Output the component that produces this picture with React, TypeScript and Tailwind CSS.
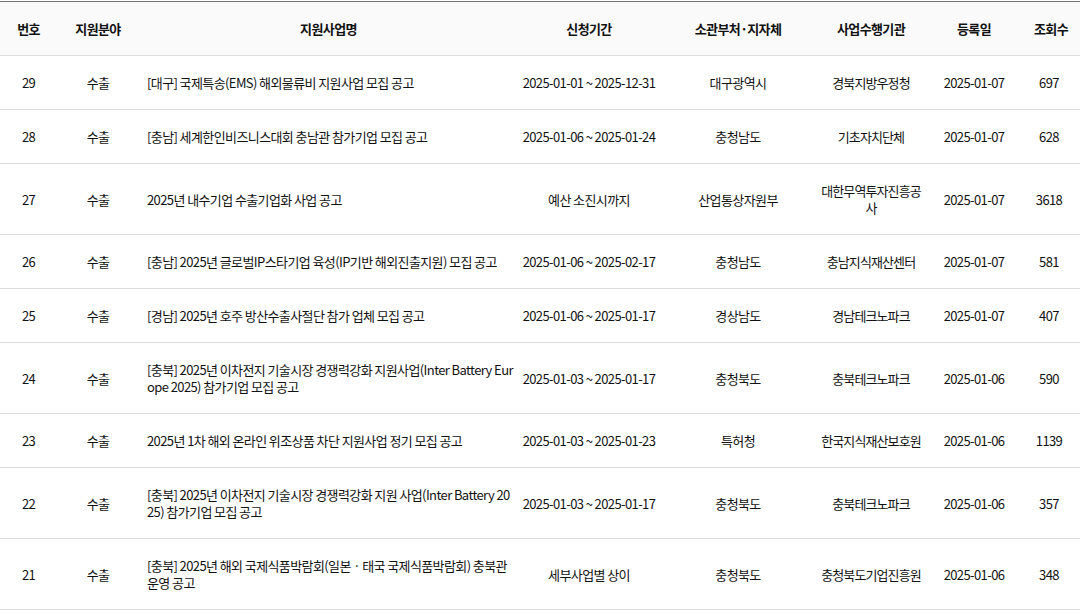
import React from "react";

type Row = {
  no: number;
  field: string;
  title: string;
  period: string;
  dept: string;
  agency: string;
  date: string;
  views: number;
};

const rows: Row[] = [
  { no: 29, field: "수출", title: "[대구] 국제특송(EMS) 해외물류비 지원사업 모집 공고", period: "2025-01-01 ~ 2025-12-31", dept: "대구광역시", agency: "경북지방우정청", date: "2025-01-07", views: 697 },
  { no: 28, field: "수출", title: "[충남] 세계한인비즈니스대회 충남관 참가기업 모집 공고", period: "2025-01-06 ~ 2025-01-24", dept: "충청남도", agency: "기초자치단체", date: "2025-01-07", views: 628 },
  { no: 27, field: "수출", title: "2025년 내수기업 수출기업화 사업 공고", period: "예산 소진시까지", dept: "산업통상자원부", agency: "대한무역투자진흥공사", date: "2025-01-07", views: 3618 },
  { no: 26, field: "수출", title: "[충남] 2025년 글로벌IP스타기업 육성(IP기반 해외진출지원) 모집 공고", period: "2025-01-06 ~ 2025-02-17", dept: "충청남도", agency: "충남지식재산센터", date: "2025-01-07", views: 581 },
  { no: 25, field: "수출", title: "[경남] 2025년 호주 방산수출사절단 참가 업체 모집 공고", period: "2025-01-06 ~ 2025-01-17", dept: "경상남도", agency: "경남테크노파크", date: "2025-01-07", views: 407 },
  { no: 24, field: "수출", title: "[충북] 2025년 이차전지 기술시장 경쟁력강화 지원사업(Inter Battery Europe 2025) 참가기업 모집 공고", period: "2025-01-03 ~ 2025-01-17", dept: "충청북도", agency: "충북테크노파크", date: "2025-01-06", views: 590 },
  { no: 23, field: "수출", title: "2025년 1차 해외 온라인 위조상품 차단 지원사업 정기 모집 공고", period: "2025-01-03 ~ 2025-01-23", dept: "특허청", agency: "한국지식재산보호원", date: "2025-01-06", views: 1139 },
  { no: 22, field: "수출", title: "[충북] 2025년 이차전지 기술시장 경쟁력강화 지원 사업(Inter Battery 2025) 참가기업 모집 공고", period: "2025-01-03 ~ 2025-01-17", dept: "충청북도", agency: "충북테크노파크", date: "2025-01-06", views: 357 },
  { no: 21, field: "수출", title: "[충북] 2025년 해외 국제식품박람회(일본 · 태국 국제식품박람회) 충북관 운영 공고", period: "세부사업별 상이", dept: "충청북도", agency: "충청북도기업진흥원", date: "2025-01-06", views: 348 },
];

const heads = ["번호", "지원분야", "지원사업명", "신청기간", "소관부처·지자체", "사업수행기관", "등록일", "조회수"];

export default function App(): React.ReactElement {
  return (
    <div className="w-[1080px] h-[614px] bg-white pt-px overflow-hidden text-[#111] font-['Noto_Sans_CJK_KR','Noto_Sans',sans-serif] text-[13px] leading-[17px] tracking-[-0.6px]">
      <table className="w-full table-fixed border-collapse border-t border-[#777]">
        <colgroup>
          <col className="w-[57px]" />
          <col className="w-[82px]" />
          <col className="w-[379px]" />
          <col className="w-[142px]" />
          <col className="w-[156px]" />
          <col className="w-[110px]" />
          <col className="w-[96px]" />
          <col className="w-[58px]" />
        </colgroup>
        <thead>
          <tr className="bg-[#fafafa] border-b border-[#ddd]">
            {heads.map((h) => (
              <th key={h} className="h-[54px] px-1 font-bold text-center align-middle">{h}</th>
            ))}
          </tr>
        </thead>
        <tbody>
          {rows.map((r) => (
            <tr key={r.no} className="border-b border-[#ddd]">
              <td className="py-[18px] text-center">{r.no}</td>
              <td className="py-[18px] text-center">{r.field}</td>
              <td className="py-[18px] pl-2 pr-1 text-left break-all">{r.title}</td>
              <td className="py-[18px] text-center">{r.period}</td>
              <td className="py-[18px] text-center">{r.dept}</td>
              <td className="py-[18px] px-0 text-center break-all tracking-[-0.9px]">{r.agency}</td>
              <td className="py-[18px] text-center">{r.date}</td>
              <td className="py-[18px] pr-1 text-center">{r.views}</td>
            </tr>
          ))}
        </tbody>
      </table>
    </div>
  );
}
